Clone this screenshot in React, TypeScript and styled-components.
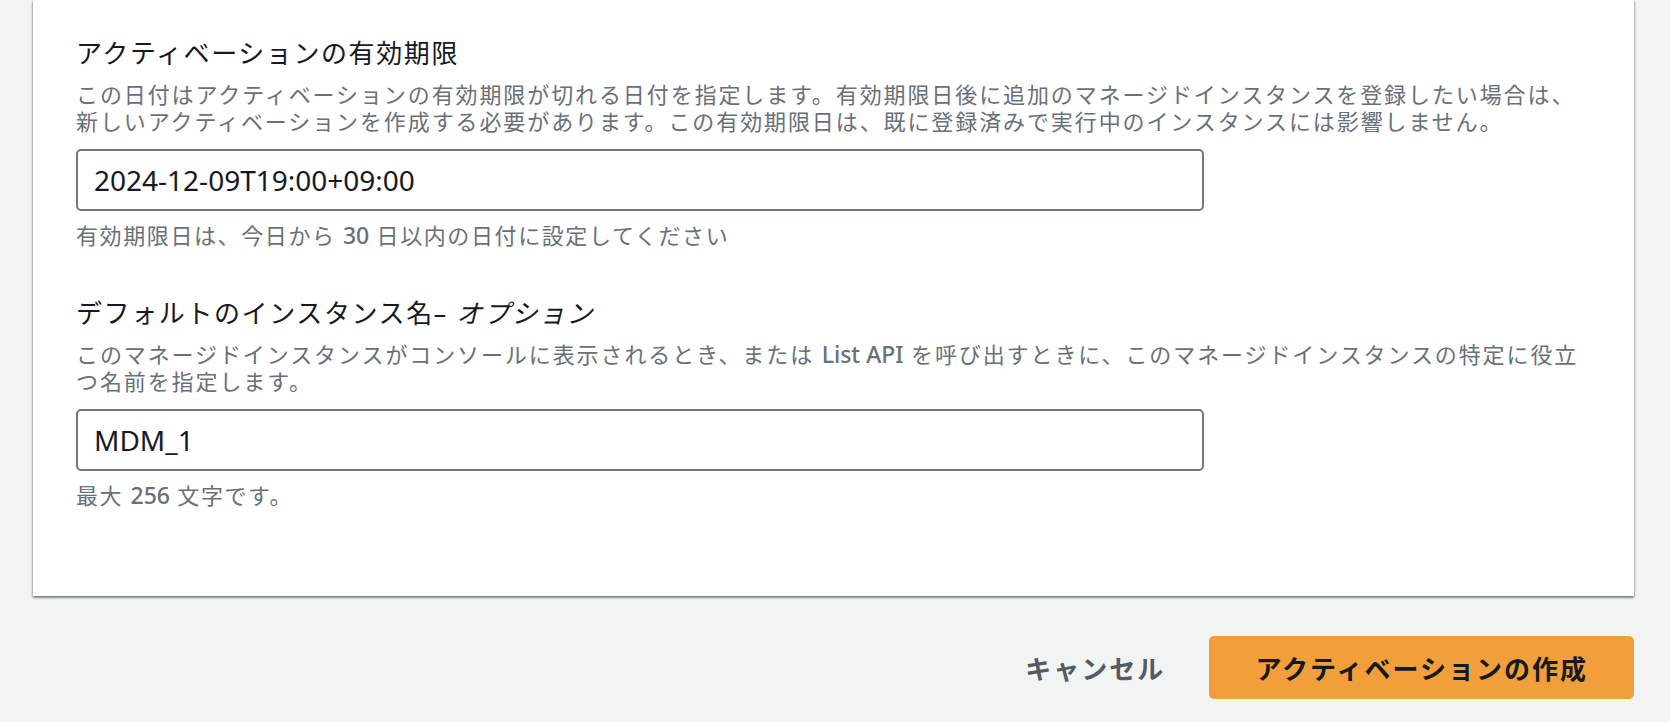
import React from "react";
import styled, { createGlobalStyle } from "styled-components";

const GlobalStyle = createGlobalStyle`
	body {
		margin: 0;
		background: #f2f3f3;
		font-family: "Noto Sans", "Noto Sans CJK JP", sans-serif;
		color: #16191f;
	}
`;

const Page = styled.div`
	display: flex;
	flex-direction: column;
	padding: 0 36px 0 33px;
`;

const Panel = styled.section`
	display: flex;
	flex-direction: column;
	gap: 46px;
	background: #ffffff;
	padding: 35px 43px 87px;
	box-shadow: 0 2px 2px 0 rgba(0, 28, 36, 0.35), 1px 1px 2px 0 rgba(0, 28, 36, 0.2),
		-1px 1px 2px 0 rgba(0, 28, 36, 0.2);
`;

const Field = styled.div`
	display: flex;
	flex-direction: column;
	align-items: flex-start;
`;

const Label = styled.label`
	font-size: 26px;
	line-height: 36px;
	letter-spacing: 1.6px;
	color: #16191f;
	margin-bottom: 10px;

	i {
		font-style: italic;
	}
`;

const Description = styled.div`
	font-size: 22px;
	line-height: 27px;
	letter-spacing: 1.9px;
	color: #687078;
	margin-bottom: 14px;
	white-space: nowrap;
`;

// 英数字の部分は字間を詰める
const Latin = styled.span`
	font-size: 23px;
	letter-spacing: 0;
	font-weight: 500;
`;

const TextInput = styled.input`
	box-sizing: border-box;
	width: 1128px;
	height: 62px;
	padding: 0 16px;
	border: 2px solid #707880;
	border-radius: 5px;
	background: #ffffff;
	font-family: "Noto Sans", "Noto Sans CJK JP", sans-serif;
	font-size: 28px;
	color: #16191f;
	outline: none;
`;

const Hint = styled.div`
	margin-top: 11px;
	font-size: 22px;
	line-height: 27px;
	letter-spacing: 1.6px;
	color: #687078;
`;

const Actions = styled.div`
	display: flex;
	justify-content: flex-end;
	align-items: center;
	gap: 22px;
	margin-top: 40px;
`;

const Button = styled.button<{ $primary?: boolean }>`
	height: 63px;
	padding: 0 ${(p) => (p.$primary ? "46px" : "22px")};
	border: none;
	border-radius: 5px;
	background: ${(p) => (p.$primary ? "#f19f3a" : "transparent")};
	color: ${(p) => (p.$primary ? "#16191f" : "#545b64")};
	font-family: "Noto Sans", "Noto Sans CJK JP", sans-serif;
	font-size: 26px;
	font-weight: 700;
	letter-spacing: 2px;
	cursor: pointer;
`;

const App = () => {
	return (
		<Page>
			<GlobalStyle />
			<Panel>
				<Field>
					<Label>アクティベーションの有効期限</Label>
					<Description>
						この日付はアクティベーションの有効期限が切れる日付を指定します。有効期限日後に追加のマネージドインスタンスを登録したい場合は、
						<br />
						新しいアクティベーションを作成する必要があります。この有効期限日は、既に登録済みで実行中のインスタンスには影響しません。
					</Description>
					<TextInput readOnly value="2024-12-09T19:00+09:00" />
					<Hint>
						有効期限日は、今日から <Latin>30</Latin> 日以内の日付に設定してください
					</Hint>
				</Field>
				<Field>
					<Label>
						デフォルトのインスタンス名<i>– オプション</i>
					</Label>
					<Description>
						このマネージドインスタンスがコンソールに表示されるとき、または <Latin>List API</Latin>{" "}
						を呼び出すときに、このマネージドインスタンスの特定に役立
						<br />
						つ名前を指定します。
					</Description>
					<TextInput readOnly value="MDM_1" />
					<Hint>
						最大 <Latin>256</Latin> 文字です。
					</Hint>
				</Field>
			</Panel>
			<Actions>
				<Button>キャンセル</Button>
				<Button $primary>アクティベーションの作成</Button>
			</Actions>
		</Page>
	);
};

export default App;
